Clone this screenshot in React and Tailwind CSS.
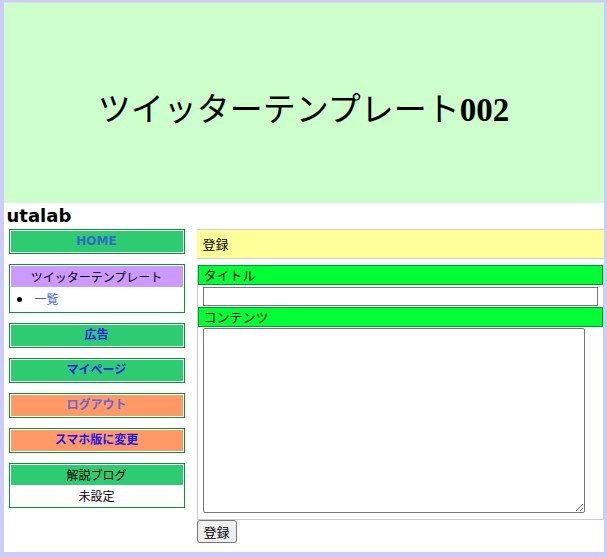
const JP = { fontFamily: '"Noto Sans CJK JP", sans-serif' };

const SideButton = ({ label, bg, color }) => (
	<div className="mb-[10px] border border-[#009933] p-px">
		<div
			className={`h-[21px] text-center text-[12px] font-bold leading-[21px] ${bg} ${color}`}
			style={{ fontFamily: '"DejaVu Sans", "Noto Sans CJK JP", sans-serif' }}
		>
			{label}
		</div>
	</div>
);

export default function App() {
	return (
		<div className="min-h-[557px] bg-[#ccccff] pt-[2px]" style={JP}>
			<div className="mx-auto w-[600px] border-t border-[#dddddd] bg-white pb-[9px]">
				<header className="flex h-[200px] items-center justify-center bg-[#ccffcc] pt-[14px]">
					<h1
						className="text-[33px] font-normal leading-none text-black"
						style={{ fontFamily: '"Liberation Serif", "Noto Sans CJK JP", serif' }}
					>
						ツイッターテンプレート<span className="font-bold">002</span>
					</h1>
				</header>
				<div
					className="h-[26px] pl-[3px] pt-[2px] text-[18px] font-bold leading-[22px] text-black"
					style={{ fontFamily: '"DejaVu Sans", sans-serif' }}
				>
					utalab
				</div>
				<div className="flex gap-[12px] pl-[5px]">
					<aside className="w-[176px] shrink-0">
						<SideButton label="HOME" bg="bg-[#2ecc71]" color="text-[#3366cc]" />
						<div className="mb-[10px] border border-[#009933] p-px">
							<div className="h-[21px] bg-[#cc99ff] text-center text-[12px] leading-[21px] text-black">
								ツイッターテンプレート
							</div>
							<ul className="h-[24px] list-disc pl-[22px] text-[12px] leading-[24px] text-black">
								<li className="pl-[2px]">
									<span className="text-[#3366cc]">一覧</span>
								</li>
							</ul>
						</div>
						<SideButton label="広告" bg="bg-[#2ecc71]" color="text-[#1a1aee]" />
						<SideButton label="マイページ" bg="bg-[#2ecc71]" color="text-[#1a1aee]" />
						<SideButton label="ログアウト" bg="bg-[#ff9966]" color="text-[#6666dd]" />
						<SideButton label="スマホ版に変更" bg="bg-[#ff9966]" color="text-[#1a1aee]" />
						<div className="border border-[#009933] p-px">
							<div className="h-[20px] bg-[#2ecc71] text-center text-[12px] leading-[20px] text-black">
								解説ブログ
							</div>
							<div className="h-[21px] text-center text-[12px] leading-[21px] text-black">
								未設定
							</div>
						</div>
					</aside>
					<main className="min-w-0 flex-1">
						<div className="h-[30px] border-y border-[#cccccc] bg-[#ffff99] pl-[6px] text-[13px] leading-[28px] text-black">
							登録
						</div>
						<div className="mt-[6px] border-x border-b border-[#cccccc] pb-[6px]">
							<div className="h-[20px] border border-[#009933] bg-[#00ff33] pl-[5px] text-[13px] leading-[18px] text-black">
								タイトル
							</div>
							<div className="px-[5px] pb-px pt-[2px]">
								<input
									type="text"
									className="block h-[19px] w-full border border-[#767676] bg-white"
								/>
							</div>
							<div className="h-[20px] border border-[#009933] bg-[#00ff33] pl-[5px] text-[13px] leading-[18px] text-black">
								コンテンツ
							</div>
							<div className="px-[5px] pt-px">
								<textarea className="block h-[185px] w-[382px] rounded-[2px] border border-[#767676] bg-white" />
							</div>
						</div>
						<button
							type="button"
							className="block h-[23px] rounded-[3px] border border-[#767676] bg-[#efefef] px-[6px] text-[13px] leading-[21px] text-black"
						>
							登録
						</button>
					</main>
				</div>
			</div>
		</div>
	);
}
